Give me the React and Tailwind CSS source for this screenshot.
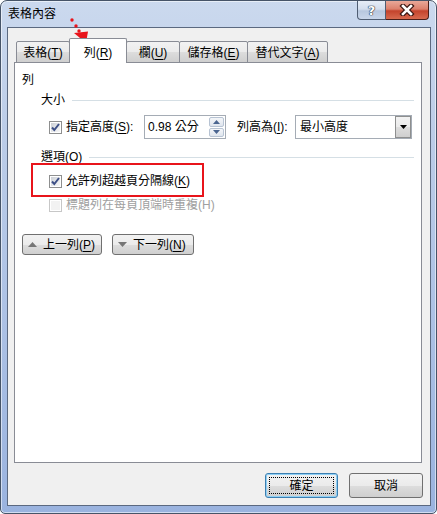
import React from "react";

const U = ({ children }) => <span className="underline underline-offset-[2px] decoration-[1px]">{children}</span>;

function Check({ checked, disabled }) {
  return (
    <span
      className={`w-[13px] h-[13px] shrink-0 border p-px ${
        disabled ? "border-[#c7c7c7] bg-white" : "border-[#8e8f8f] bg-white"
      }`}
    >
      <span
        className={`block w-full h-full relative ${
          disabled
            ? "bg-[#f2f2f2]"
            : "bg-[linear-gradient(135deg,#cbcfd5_0%,#e3e5e8_50%,#f7f7f7_100%)]"
        }`}
      >
        {checked && (
          <svg className="absolute left-[-1px] top-[-1px]" width="11" height="11" viewBox="0 0 11 11">
            <path d="M2 5.5 L4.3 8 L9 2" fill="none" stroke="#3d4f86" strokeWidth="2" />
          </svg>
        )}
      </span>
    </span>
  );
}

function Tab({ w, children }) {
  return (
    <div
      className={`${w} h-[22px] -ml-px first:ml-0 border border-[#898c95] rounded-t-[2px] bg-[linear-gradient(180deg,#f2f2f2_0%,#ebebeb_50%,#dddddd_51%,#cfcfcf_100%)] flex items-center justify-center leading-[16px] pt-px`}
    >
      {children}
    </div>
  );
}

function GroupHeader({ children }) {
  return (
    <div className="flex items-center h-[16px] pl-[26px] pr-[7px]">
      <span className="leading-[16px] whitespace-nowrap">{children}</span>
      <span className="flex-1 h-px bg-[#d5dfe5] ml-[7px] mt-px" />
    </div>
  );
}

const btnBg =
  "bg-[linear-gradient(180deg,#f2f2f2_0%,#ebebeb_50%,#dddddd_51%,#cfcfcf_100%)]";

export default function App() {
  return (
    <div className="relative w-[437px] h-[514px] overflow-hidden bg-white font-['Liberation_Sans','Noto_Sans_CJK_TC',sans-serif] text-[12px] text-black">
      <div className="w-full h-full flex flex-col rounded-t-[7px] rounded-b-[5px] border border-[#465468] bg-[linear-gradient(180deg,#cbd9ee_0%,#bccde8_25%,#adc2e5_60%,#9ab3df_100%)] shadow-[inset_0_0_0_1px_rgba(255,255,255,0.55)]">
        {/* title bar */}
        <div className="h-[26px] flex shrink-0">
          <div className="pl-[7px] pt-[5px] leading-[16px] text-[12px] text-black">表格內容</div>
          <div className="ml-auto mr-[7px] flex h-[19px]">
            <div className="w-[29px] h-full border border-[#4f5d72] border-t-0 rounded-bl-[4px] bg-[linear-gradient(180deg,#e6edf7_0%,#d3deee_45%,#b7c7de_55%,#c9d6ea_100%)] flex items-center justify-center">
              <span className="font-['DejaVu_Sans',sans-serif] font-bold text-[13px] leading-none text-white [text-shadow:0_0_1px_#1d2a3e,0_0_1px_#1d2a3e,0_0_1px_#1d2a3e]">?</span>
            </div>
            <div className="w-[43px] h-full border border-[#4a1e18] border-t-0 border-l-0 rounded-br-[4px] bg-[linear-gradient(180deg,#e9a899_0%,#dc806c_45%,#c4432c_55%,#d86a4f_100%)] flex items-center justify-center">
              <svg width="16" height="12" viewBox="0 0 16 12">
                <path d="M4 2 L12 10 M12 2 L4 10" stroke="#3a1611" strokeWidth="5" strokeLinecap="square" />
                <path d="M4 2 L12 10 M12 2 L4 10" stroke="#ffffff" strokeWidth="2.6" strokeLinecap="square" />
              </svg>
            </div>
          </div>
        </div>

        {/* client */}
        <div className="ml-[6px] mr-[5px] h-[479px] shrink-0 border border-[#5b6980] bg-[#f0f0f0] flex flex-col">
          {/* tabs */}
          <div className="mt-[10px] h-[25px] flex items-end pl-[8px] relative z-10 -mb-px">
            <Tab w="w-[54px]">表格(<U>T</U>)</Tab>
            <div className="w-[58px] h-[25px] -ml-px border border-b-0 border-[#898c95] rounded-t-[2px] bg-white flex justify-center leading-[16px] pt-[6px] relative z-10">
              列(<U>R</U>)
            </div>
            <Tab w="w-[54px]">欄(<U>U</U>)</Tab>
            <Tab w="w-[69px]">儲存格(<U>E</U>)</Tab>
            <Tab w="w-[81px]">替代文字(<U>A</U>)</Tab>
          </div>

          {/* panel */}
          <div className="relative ml-[6px] mr-[8px] h-[401px] border border-[#898c95] bg-white flex flex-col">
            <div className="pl-[7px] pt-[9px] leading-[16px]">列</div>
            <div className="mt-[4px]">
              <GroupHeader>大小</GroupHeader>
            </div>

            <div className="mt-[7px] h-[24px] flex items-center pl-[34px]">
              <Check checked />
              <span className="ml-[4px] w-[78px] leading-[16px] whitespace-nowrap">
                指定高度(<U>S</U>):
              </span>
              <div className="w-[82px] h-[24px] border border-[#a5acb5] bg-white flex items-center">
                <span className="pl-[3px] leading-[16px] flex-1">0.98 公分</span>
                <div className="w-[15px] h-[20px] mr-px flex flex-col gap-px">
                  <div className="flex-1 border border-[#b7c3d3] rounded-[2px] bg-[linear-gradient(180deg,#f4f6f9,#dfe5ee)] flex items-center justify-center">
                    <svg width="7" height="4" viewBox="0 0 7 4"><path d="M0 4 L3.5 0 L7 4 Z" fill="#4a6590" /></svg>
                  </div>
                  <div className="flex-1 border border-[#b7c3d3] rounded-[2px] bg-[linear-gradient(180deg,#f4f6f9,#dfe5ee)] flex items-center justify-center">
                    <svg width="7" height="4" viewBox="0 0 7 4"><path d="M0 0 L7 0 L3.5 4 Z" fill="#4a6590" /></svg>
                  </div>
                </div>
              </div>
              <span className="ml-[11px] w-[58px] leading-[16px] whitespace-nowrap">
                列高為(<U>I</U>):
              </span>
              <div className="w-[117px] h-[24px] border border-[#a5acb5] bg-white flex items-center">
                <span className="pl-[4px] leading-[16px] flex-1">最小高度</span>
                <div className="w-[16px] h-[22px] border border-[#8e8f8f] bg-[linear-gradient(180deg,#f2f2f2_0%,#ebebeb_50%,#dddddd_51%,#cfcfcf_100%)] flex items-center justify-center">
                  <svg width="7" height="4" viewBox="0 0 7 4"><path d="M0 0 L7 0 L3.5 4 Z" fill="#000" /></svg>
                </div>
              </div>
            </div>

            <div className="mt-[10px]">
              <GroupHeader>選項(<U>O</U>)</GroupHeader>
            </div>

            <div className="mt-[8px] h-[16px] flex items-center pl-[34px]">
              <Check checked />
              <span className="ml-[4px] leading-[16px] whitespace-nowrap">
                允許列超越頁分隔線(<U>K</U>)
              </span>
            </div>
            <div className="mt-[8px] h-[16px] flex items-center pl-[34px] text-[#a0a0a0]">
              <Check disabled />
              <span className="ml-[4px] leading-[16px] whitespace-nowrap">
                標題列在每頁頂端時重複(H)
              </span>
            </div>

            <div className="mt-[21px] pl-[7px] flex gap-[10px]">
              <div className={`w-[80px] h-[21px] border border-[#707070] rounded-[3px] ${btnBg} flex items-center pl-[5px]`}>
                <svg width="9" height="5" viewBox="0 0 9 5"><path d="M0 5 L4.5 0 L9 5 Z" fill="#767676" /></svg>
                <span className="ml-[6px] leading-[16px] whitespace-nowrap">上一列(<U>P</U>)</span>
              </div>
              <div className={`w-[82px] h-[21px] border border-[#707070] rounded-[3px] ${btnBg} flex items-center pl-[5px]`}>
                <svg width="9" height="5" viewBox="0 0 9 5"><path d="M0 0 L9 0 L4.5 5 Z" fill="#767676" /></svg>
                <span className="ml-[6px] leading-[16px] whitespace-nowrap">下一列(<U>N</U>)</span>
              </div>
            </div>

            {/* red annotation box */}
            <div className="absolute left-[16px] top-[100px] w-[173px] h-[34px] border-2 border-[#e8141b]" />
          </div>

          {/* bottom buttons */}
          <div className="mt-[10px] flex justify-end gap-[11px] pr-[7px]">
            <div className={`w-[73px] h-[25px] border border-[#3c7fb1] rounded-[3px] shadow-[inset_0_0_0_1px_#8fd0f5] ${btnBg} p-[3px]`}>
              <div className="w-full h-full border border-dotted border-black flex items-center justify-center leading-[16px]">確定</div>
            </div>
            <div className={`w-[74px] h-[25px] border border-[#707070] rounded-[3px] ${btnBg} flex items-center justify-center leading-[16px]`}>
              取消
            </div>
          </div>
        </div>
      </div>

      {/* red dotted arrow annotation */}
      <svg className="absolute left-[64px] top-[12px]" width="30" height="34" viewBox="0 0 30 34">
        <circle cx="8" cy="8" r="1.7" fill="#e8141b" />
        <circle cx="12" cy="14" r="1.7" fill="#e8141b" />
        <circle cx="15" cy="19" r="1.7" fill="#e8141b" />
        <path d="M10 21 L24 19.5 L22 31 Z" fill="#e8141b" />
      </svg>
    </div>
  );
}
